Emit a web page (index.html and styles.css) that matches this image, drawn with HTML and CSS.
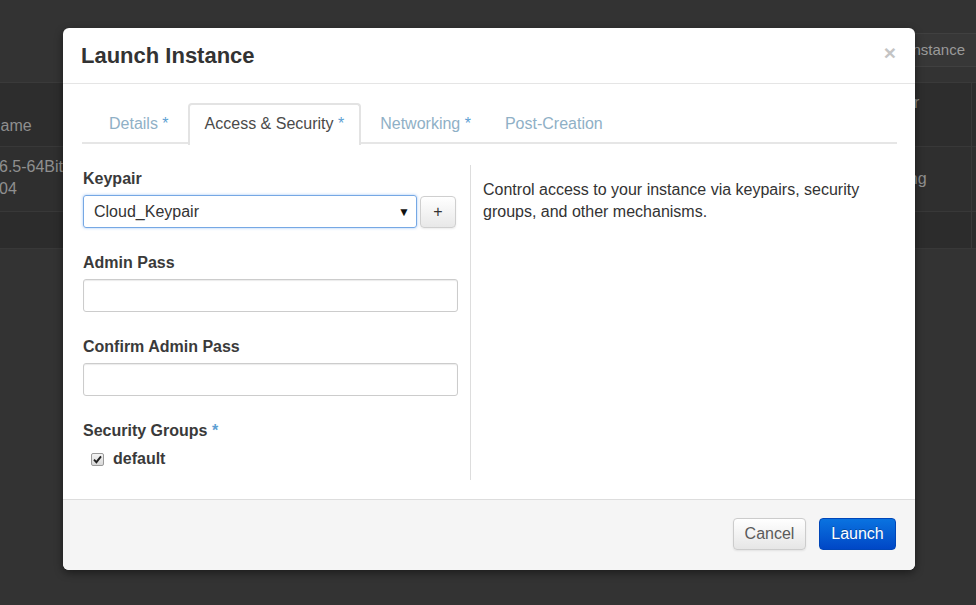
FILE: index.html
```html
<!DOCTYPE html>
<html>
<head>
<meta charset="utf-8">
<title>Launch Instance</title>
<link rel="stylesheet" href="styles.css">
</head>
<body>
<div class="page">
  <div class="topbar"><span class="bg-btn">Launch Instance</span></div>
  <div class="bg-table">
    <div class="bg-row head">
      <div class="c1"><span class="cut">Name</span></div>
      <div class="cs"></div>
      <div class="c2 top">Power</div>
      <div class="c3"></div>
    </div>
    <div class="bg-row r1">
      <div class="c1 two"><span class="cut2">6.5-64Bit-<br>04</span></div>
      <div class="cs"></div>
      <div class="c2 mid">Running</div>
      <div class="c3"></div>
    </div>
    <div class="bg-row r2">
      <div class="c1"></div>
      <div class="cs"></div>
      <div class="c2"></div>
      <div class="c3"></div>
    </div>
  </div>
</div>

<div class="modal">
  <div class="modal-header">
    <h3 class="title">Launch Instance</h3>
    <span class="close">×</span>
  </div>
  <div class="modal-body">
    <ul class="tabs">
      <li class="tab">Details <span class="req">*</span></li>
      <li class="tab active">Access &amp; Security <span class="req">*</span></li>
      <li class="tab">Networking <span class="req">*</span></li>
      <li class="tab">Post-Creation</li>
    </ul>
    <div class="content">
      <div class="left">
        <div class="label">Keypair</div>
        <div class="select-row">
          <div class="select"><span>Cloud_Keypair</span><span class="arrow">▼</span></div>
          <span class="btn plus">+</span>
        </div>
        <div class="label spaced">Admin Pass</div>
        <div class="input"></div>
        <div class="label spaced">Confirm Admin Pass</div>
        <div class="input"></div>
        <div class="label spaced">Security Groups <span class="req">*</span></div>
        <div class="check-row">
          <span class="checkbox"><svg width="9" height="9" viewBox="0 0 9 9"><path d="M1 4.6 L3.4 7.2 L8 1.4" fill="none" stroke="#222" stroke-width="1.9"/></svg></span>
          <span class="check-label">default</span>
        </div>
      </div>
      <div class="right">
        <p class="help">Control access to your instance via keypairs, security groups, and other mechanisms.</p>
      </div>
    </div>
  </div>
  <div class="modal-footer">
    <span class="btn cancel">Cancel</span>
    <span class="btn primary">Launch</span>
  </div>
</div>
</body>
</html>
```

FILE: styles.css
```css
html, body {
  margin: 0;
  padding: 0;
}
body {
  background: #333333;
  font-family: "Liberation Sans", Arial, sans-serif;
  width: 976px;
  height: 605px;
  overflow: hidden;
  position: relative;
}

/* background page (dimmed) */
.page {
  color: #8f8f8f;
  font-size: 16px;
}
.topbar {
  height: 82px;
  display: flex;
  justify-content: flex-end;
  align-items: flex-start;
}
.bg-btn {
  margin-top: 33px;
  height: 32px;
  line-height: 32px;
  padding: 0 11px;
  border: 1px solid #404040;
  border-right: none;
  border-radius: 3px 0 0 3px;
  background: #373737;
  color: #9a9a9a;
  font-size: 15px;
}
.bg-table {
  border-top: 1px solid #3a3a3a;
}
.bg-row {
  display: grid;
  grid-template-columns: 100px 1fr 110px 5px;
  border-bottom: 1px solid #383838;
}
.bg-row.head { height: 63px; background: #2d2d2d; }
.bg-row.r1 { height: 64px; background: #2f2f2f; }
.bg-row.r2 { height: 36px; background: #2c2c2c; }
.c1 {
  overflow: hidden;
  display: flex;
  align-items: flex-end;
  padding-bottom: 11px;
}
.c1.two {
  align-items: flex-start;
  padding: 9px 0 0;
  line-height: 22px;
}
.cut { margin-left: -11px; }
.cut2 { margin-left: -1px; }
.c2 {
  padding: 22px 0 0 6px;
}
.c2.top { padding: 11px 0 0 13px; }
.c2.mid { padding: 23px 0 0 6px; }
.c3 { border-left: 1px solid #393939; }

/* modal */
.modal {
  position: absolute;
  left: 63px;
  top: 28px;
  width: 852px;
  height: 542px;
  background: #ffffff;
  border-radius: 6px;
  box-shadow: 0 3px 8px rgba(0, 0, 0, 0.45);
  display: flex;
  flex-direction: column;
  color: #333333;
}
.modal-header {
  height: 55px;
  border-bottom: 1px solid #e5e5e5;
  display: flex;
  align-items: center;
  justify-content: space-between;
  padding: 0 19px 0 18px;
}
.title {
  margin: 0;
  font-size: 22px;
  font-weight: bold;
  line-height: 55px;
  color: #333333;
}
.close {
  font-size: 21px;
  font-weight: bold;
  color: #c4c4c4;
  line-height: 20px;
  margin-top: -6px;
}
.modal-body {
  flex: 1;
  padding: 19px 18px 0 19px;
}
.tabs {
  list-style: none;
  margin: 0;
  padding: 0 0 0 11px;
  display: flex;
  border-bottom: 2px solid #e6e6e6;
  height: 39px;
}
.tab {
  font-size: 16px;
  line-height: 39px;
  height: 39px;
  padding: 0 15px;
  margin-right: 2px;
  border: 1px solid transparent;
  border-bottom: none;
  border-radius: 4px 4px 0 0;
  color: #8fb0c6;
}
.tab.active {
  border-color: #e3e3e3;
  border-width: 2px 2px 0 2px;
  padding: 0 15px;
  height: 40px;
  line-height: 38px;
  margin-left: 1px;
  margin-right: 3px;
  background: #ffffff;
  color: #4a4a4a;
  position: relative;
}
.req { color: #5d9fd3; }

.content {
  display: flex;
  margin-top: 21px;
  padding-left: 1px;
}
.left {
  width: 375px;
  padding-top: 4px;
}
.label {
  font-size: 16px;
  font-weight: bold;
  line-height: 20px;
  color: #3a3a3a;
  margin-bottom: 6px;
}
.label.spaced { margin-top: 25px; }
.select-row {
  display: flex;
  align-items: flex-start;
  gap: 3px;
}
.select {
  width: 334px;
  height: 33px;
  box-sizing: border-box;
  border: 1px solid #76a8e4;
  border-radius: 3px;
  box-shadow: 0 0 3px rgba(82, 150, 236, 0.55);
  display: flex;
  align-items: center;
  justify-content: space-between;
  padding: 0 6px 0 10px;
  font-size: 16px;
  color: #333333;
}
.arrow {
  font-size: 12px;
  color: #111111;
}
.btn {
  display: inline-flex;
  align-items: center;
  justify-content: center;
  box-sizing: border-box;
  border-radius: 4px;
  font-size: 16px;
}
.plus {
  width: 36px;
  height: 32px;
  margin-top: 1px;
  border: 1px solid #cfcfcf;
  background: linear-gradient(#ffffff, #e8e8e8);
  color: #333333;
  box-shadow: 0 1px 2px rgba(0, 0, 0, 0.08);
}
.input {
  width: 375px;
  height: 33px;
  box-sizing: border-box;
  border: 1px solid #cccccc;
  border-radius: 3px;
  box-shadow: inset 0 1px 1px rgba(0, 0, 0, 0.08);
}
.check-row {
  display: flex;
  align-items: center;
  margin-top: 8px;
  padding-left: 8px;
  height: 20px;
}
.checkbox {
  width: 13px;
  height: 13px;
  box-sizing: border-box;
  border: 1px solid #9a9a9a;
  border-radius: 2px;
  background: linear-gradient(#f4f4f4, #d8d8d8);
  display: flex;
  align-items: center;
  justify-content: center;
  margin-right: 9px;
}
.check-label {
  font-size: 16px;
  font-weight: bold;
  color: #3a3a3a;
}
.right {
  margin-left: 12px;
  border-left: 1px solid #dddddd;
  height: 315px;
  padding-left: 12px;
  flex: 1;
}
.help {
  margin: 14px 0 0;
  font-size: 16px;
  line-height: 22px;
  color: #333333;
  width: 400px;
}

.modal-footer {
  height: 71px;
  flex-shrink: 0;
  border-top: 1px solid #dddddd;
  background: #f5f5f5;
  border-radius: 0 0 6px 6px;
  display: flex;
  justify-content: flex-end;
  align-items: flex-start;
  padding: 18px 19px 0 0;
  box-sizing: border-box;
  gap: 13px;
}
.cancel {
  width: 73px;
  height: 32px;
  border: 1px solid #cccccc;
  background: linear-gradient(#ffffff, #e6e6e6);
  color: #5a5a5a;
  box-shadow: 0 1px 2px rgba(0, 0, 0, 0.08);
}
.primary {
  width: 77px;
  height: 32px;
  border: 1px solid #0046b8;
  background: linear-gradient(#0a73e0, #0047c6);
  color: #ffffff;
  text-shadow: 0 -1px 0 rgba(0, 0, 0, 0.25);
}
```
